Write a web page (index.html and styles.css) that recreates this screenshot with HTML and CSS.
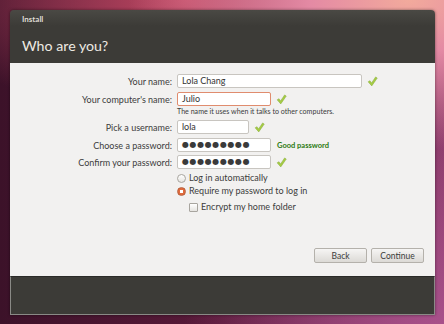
FILE: index.html
```html
<!DOCTYPE html>
<html lang="en">
<head>
    <meta charset="UTF-8">
    <title>Install</title>
    <link rel="stylesheet" href="styles.css">
</head>
<body>
    <div class="window">
        <header class="titlebar">
            <div class="app-name">Install</div>
            <h1>Who are you?</h1>
        </header>

        <main class="content">
            <div class="form">
                <div class="row row-name">
                    <label>Your name:</label>
                    <div class="field-wrap">
                        <div class="field wide">Lola Chang</div>
                        <svg class="check" viewBox="0 0 12 12"><path d="M1.2 6.4 L3.3 5.1 L5 7.5 L9.4 1 L11.2 2.3 L5.2 10.8 Z"/></svg>
                    </div>
                </div>
                <div class="row row-computer">
                    <label>Your computer's name:</label>
                    <div class="field-wrap">
                        <div class="field medium active">Julio</div>
                        <svg class="check" viewBox="0 0 12 12"><path d="M1.2 6.4 L3.3 5.1 L5 7.5 L9.4 1 L11.2 2.3 L5.2 10.8 Z"/></svg>
                    </div>
                </div>
                <div class="row row-hint">
                    <span></span>
                    <div class="hint">The name it uses when it talks to other computers.</div>
                </div>
                <div class="row row-user">
                    <label>Pick a username:</label>
                    <div class="field-wrap">
                        <div class="field short">lola</div>
                        <svg class="check" viewBox="0 0 12 12"><path d="M1.2 6.4 L3.3 5.1 L5 7.5 L9.4 1 L11.2 2.3 L5.2 10.8 Z"/></svg>
                    </div>
                </div>
                <div class="row row-pass">
                    <label>Choose a password:</label>
                    <div class="field-wrap">
                        <div class="field medium dots">●●●●●●●●●</div>
                        <span class="strength">Good password</span>
                    </div>
                </div>
                <div class="row row-confirm">
                    <label>Confirm your password:</label>
                    <div class="field-wrap">
                        <div class="field medium dots">●●●●●●●●●</div>
                        <svg class="check" viewBox="0 0 12 12"><path d="M1.2 6.4 L3.3 5.1 L5 7.5 L9.4 1 L11.2 2.3 L5.2 10.8 Z"/></svg>
                    </div>
                </div>
                <div class="row row-auto">
                    <span></span>
                    <div class="option"><span class="radio"></span>Log in automatically</div>
                </div>
                <div class="row row-require">
                    <span></span>
                    <div class="option"><span class="radio selected"></span>Require my password to log in</div>
                </div>
                <div class="row row-encrypt">
                    <span></span>
                    <div class="option sub"><span class="checkbox"></span>Encrypt my home folder</div>
                </div>
            </div>

            <div class="actions">
                <button>Back</button>
                <button>Continue</button>
            </div>
        </main>

        <footer class="bottom"></footer>
    </div>
</body>
</html>
```

FILE: styles.css
```css
html, body {
    height: 100%;
}
body {
    margin: 0;
    padding: 10px 9px 9px 10px;
    box-sizing: border-box;
    font-family: 'Lato', 'Open Sans', sans-serif;
    color: #3c3c3c;
    background:
        radial-gradient(ellipse 280px 150px at 92% 0%, #f2aa9c 0%, #e48aa4 35%, rgba(210, 100, 130, 0) 100%),
        radial-gradient(ellipse 260px 120px at 42% 0%, #c04862 0%, rgba(160, 50, 80, 0) 100%),
        radial-gradient(ellipse 260px 220px at 100% 100%, #a8508a 0%, rgba(150, 70, 120, 0) 100%),
        linear-gradient(90deg, #3c1229 0%, #5a1a3a 50%, #8a3a68 100%);
    overflow: hidden;
}
.window {
    width: 425px;
    height: 305px;
    display: flex;
    flex-direction: column;
    border-radius: 4px 4px 0 0;
    box-shadow: 0 0 3px rgba(0,0,0,0.5);
}
.titlebar {
    height: 53px;
    box-sizing: border-box;
    padding: 4px 12px 0;
    background: linear-gradient(#4a4944, #3c3b37 30%);
    border-radius: 4px 4px 0 0;
    color: #dfdbd2;
}
.app-name {
    font-size: 8px;
    font-weight: bold;
    line-height: 10px;
}
h1 {
    margin: 12px 0 0;
    font-size: 14.2px;
    font-weight: normal;
    line-height: 20px;
    color: #eeeae3;
}
.content {
    flex: 1;
    display: flex;
    flex-direction: column;
    background: #f2f1f0;
    padding: 11px 11px 13px 0;
}
.form {
    display: flex;
    flex-direction: column;
}
.row {
    display: grid;
    grid-template-columns: 162px 1fr;
    column-gap: 5px;
    align-items: center;
    font-size: 9px;
}
.row label {
    text-align: right;
}
.row-computer { margin-top: 4px; }
.row-hint { margin-top: 1px; }
.row-user { margin-top: 3px; }
.row-pass { margin-top: 4px; }
.row-confirm { margin-top: 3px; }
.row-auto { margin-top: 4px; }
.row-require { margin-top: 3px; }
.row-encrypt { margin-top: 6px; }
.field-wrap {
    display: flex;
    align-items: center;
}
.field {
    height: 14px;
    box-sizing: border-box;
    padding: 0 4px;
    border: 1px solid #c8c5c0;
    border-radius: 2px;
    background: #fff;
    line-height: 12px;
    color: #333;
}
.field.wide { width: 185px; }
.field.medium { width: 94px; }
.field.short { width: 72px; }
.field.active {
    border-color: #e08c6e;
}
.field.dots {
    font-family: 'DejaVu Sans', sans-serif;
    font-size: 8px;
    letter-spacing: 0.6px;
    color: #3a3a3a;
}
.check {
    width: 11px;
    height: 11px;
    margin-left: 5px;
    fill: #a6cc44;
    stroke: #80a830;
    stroke-width: 0.5;
}
.strength {
    margin-left: 6px;
    font-size: 7.5px;
    font-weight: bold;
    color: #2c7a12;
}
.hint {
    font-size: 7.1px;
    line-height: 10px;
    color: #3c3c3c;
}
.option {
    display: flex;
    align-items: center;
    line-height: 10px;
}
.option.sub {
    padding-left: 12px;
}
.radio, .checkbox {
    width: 7px;
    height: 7px;
    margin-right: 3px;
    border: 1px solid #a8a59f;
    background: linear-gradient(#fff, #e6e4e0);
}
.radio {
    border-radius: 50%;
}
.radio.selected {
    border-color: #b8603c;
    background: radial-gradient(circle, #fff 0 1.5px, #e06a3c 2px);
}
.checkbox {
    border-radius: 1px;
}
.actions {
    margin-top: auto;
    display: flex;
    justify-content: flex-end;
    gap: 4px;
}
button {
    width: 53px;
    height: 15px;
    padding: 0;
    font-family: inherit;
    font-size: 8.5px;
    color: #3c3c3c;
    border: 1px solid #b4b1ab;
    border-radius: 2px;
    background: linear-gradient(#f6f5f4, #dcdad6);
}
.bottom {
    height: 39px;
    box-sizing: border-box;
    background: #3c3b37;
    border: 1px solid #8a8a86;
    border-top-color: #2a2a28;
}
```
